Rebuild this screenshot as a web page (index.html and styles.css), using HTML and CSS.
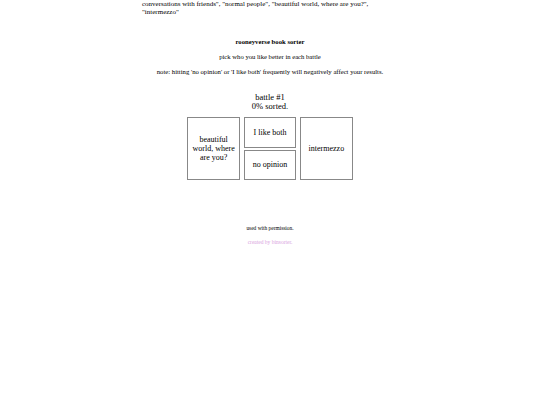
FILE: index.html
```html
<!DOCTYPE html>
<html>
<head>
<meta charset="utf-8">
<link rel="stylesheet" href="styles.css">
</head>
<body>
<div class="page">
  <p class="intro">conversations with friends", "normal people", "beautiful world, where are you?", "intermezzo"</p>
  <div class="title">rooneyverse book sorter</div>
  <div class="sub">pick who you like better in each battle</div>
  <div class="note">note: hitting 'no opinion' or 'I like both' frequently will negatively affect your results.</div>
  <div class="status">battle #1<br>0% sorted.</div>
  <div class="battle">
    <div class="opt big">beautiful world, where are you?</div>
    <div class="mid">
      <div class="opt small">I like both</div>
      <div class="opt small">no opinion</div>
    </div>
    <div class="opt big">intermezzo</div>
  </div>
  <div class="foot">used with permission.</div>
  <div class="credit">created by binsorter.</div>
</div>
</body>
</html>
```
FILE: styles.css
```css
html, body {
  margin: 0;
  padding: 0;
  background: #fff;
}
body {
  font-family: "Liberation Serif", "Times New Roman", serif;
  color: #000;
}
.page {
  width: 256px;
  margin: 0 auto;
  text-align: center;
}
.intro {
  margin: 0;
  padding-top: 0;
  text-align: left;
  font-size: 7px;
  line-height: 8px;
}
.title {
  margin-top: 22px;
  font-size: 6.7px;
  font-weight: bold;
  line-height: 8px;
}
.sub {
  margin-top: 7px;
  font-size: 6.65px;
  line-height: 8px;
}
.note {
  margin-top: 7px;
  font-size: 6.7px;
  line-height: 8px;
  white-space: nowrap;
  margin-left: -20px;
  margin-right: -20px;
}
.status {
  margin-top: 17px;
  font-size: 8.5px;
  line-height: 9px;
}
.battle {
  margin-top: 6px;
  display: flex;
  justify-content: center;
  gap: 4px;
}
.opt {
  box-sizing: border-box;
  width: 52.4px;
  border: 1px solid #888;
  display: flex;
  align-items: center;
  justify-content: center;
  font-size: 8px;
  line-height: 9px;
  padding: 2px;
}
.big {
  height: 63px;
}
.mid {
  display: flex;
  flex-direction: column;
  gap: 2px;
}
.small {
  height: 30.5px;
}
.foot {
  margin-top: 45px;
  font-size: 5.4px;
  line-height: 6px;
}
.credit {
  margin-top: 8px;
  font-size: 5.5px;
  line-height: 6px;
  color: #d9a3e0;
}
```
